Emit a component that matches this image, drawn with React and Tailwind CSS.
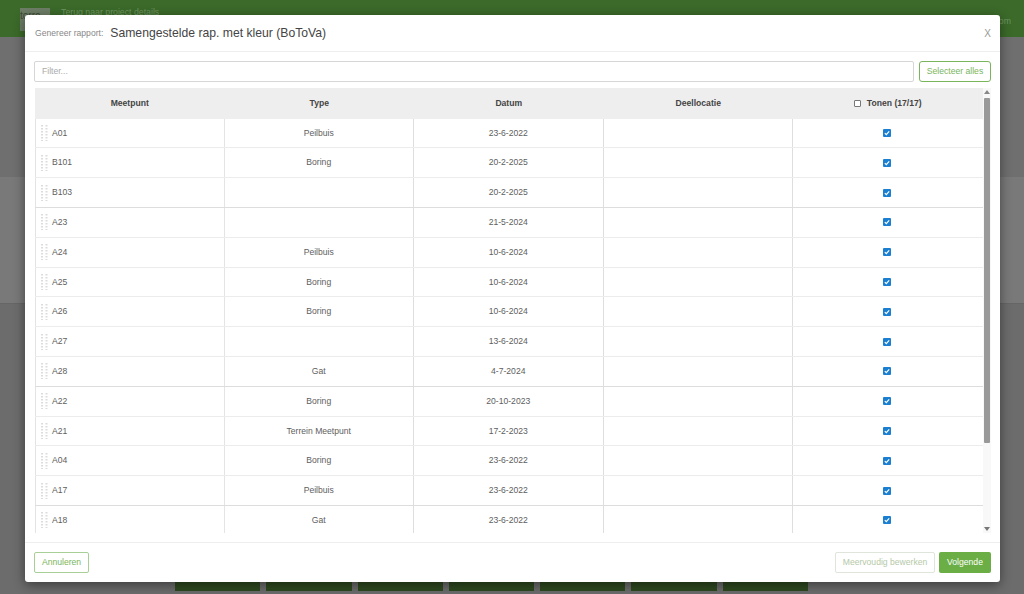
import React from "react";

const rows = [
  { name: "A01", type: "Peilbuis", date: "23-6-2022" },
  { name: "B101", type: "Boring", date: "20-2-2025" },
  { name: "B103", type: "", date: "20-2-2025", dark: true },
  { name: "A23", type: "", date: "21-5-2024" },
  { name: "A24", type: "Peilbuis", date: "10-6-2024" },
  { name: "A25", type: "Boring", date: "10-6-2024" },
  { name: "A26", type: "Boring", date: "10-6-2024" },
  { name: "A27", type: "", date: "13-6-2024" },
  { name: "A28", type: "Gat", date: "4-7-2024", dark: true },
  { name: "A22", type: "Boring", date: "20-10-2023" },
  { name: "A21", type: "Terrein Meetpunt", date: "17-2-2023" },
  { name: "A04", type: "Boring", date: "23-6-2022" },
  { name: "A17", type: "Peilbuis", date: "23-6-2022", dark: true },
  { name: "A18", type: "Gat", date: "23-6-2022" },
];

const Grip = () => (
  <svg width="7" height="16" viewBox="0 0 7 16" className="shrink-0" fill="#dcdcdc">
    {[0, 3, 6, 9, 12, 15].map((y) => (
      <g key={y}>
        <rect x="0" y={y} width="2" height="1.5" />
        <rect x="4.5" y={y} width="2" height="1.5" />
      </g>
    ))}
  </svg>
);

const Checked = () => (
  <svg width="8" height="8" viewBox="0 0 8 8">
    <rect width="8" height="8" rx="1" fill="#1a7fd0" />
    <path d="M1.8 4.2 3.3 5.7 6.2 2.4" fill="none" stroke="#fff" strokeWidth="1.2" />
  </svg>
);

const App = () => {
  return (
    <div className="relative h-[594px] w-[1024px] overflow-hidden bg-[#6c6c6c] font-['Liberation_Sans',Arial,sans-serif]">
      {/* page behind the dialog */}
      <div className="flex h-[37px] items-start justify-between bg-[#3b6a2a] pl-[20px] pr-[13px] pt-[8px] text-[8.75px] text-[#6f9560]">
        <div className="flex gap-[11px]">
          <div className="h-[23px] w-[30px] bg-[#6d7d66] pt-[1px] text-[10px] leading-[13px] text-[#3b4a34]">torro</div>
          <span className="leading-[9px]">Terug naar project details</span>
        </div>
        <span className="pt-[9px] leading-[9px]">com</span>
      </div>
      <div className="h-[140px] bg-[#6f6f6f]" />
      <div className="h-[127px] border-b border-[#666] bg-[#797979]" />
      <div className="flex h-[289px] items-end gap-[6px] pb-[2px] pl-[175px]">
        {[1, 2, 3, 4, 5, 6, 7].map((n) => (
          <div key={n} className="h-[30px] w-[85.3px] bg-[#2f4a20]" />
        ))}
      </div>

      {/* dialog */}
      <div className="absolute left-[25px] top-[15px] flex h-[567px] w-[975px] flex-col rounded-[3px] bg-white text-[8.6px] text-[#606060] shadow-[0_3px_12px_rgba(0,0,0,0.45)]">
        <div className="flex h-[37px] shrink-0 items-center border-b border-[#eeeeee] pl-[10px] pr-[9px]">
          <span className="text-[#888]">Genereer rapport:</span>
          <span className="ml-[7px] text-[12.2px] text-[#444]">Samengestelde rap. met kleur (BoToVa)</span>
          <span className="ml-auto text-[10px] text-[#999]">X</span>
        </div>

        <div className="flex gap-[5px] pl-[9px] pr-[9px] pt-[9px]">
          <div className="flex h-[21px] w-[880px] items-center rounded-[2px] border border-[#d6d6d6] pl-[7px] text-[#aaa]">
            Filter...
          </div>
          <button className="h-[21px] w-[72px] rounded-[3px] border border-[#7ab55c] text-[#7ab55c]">Selecteer alles</button>
        </div>

        <div className="flex min-h-0 flex-1 pl-[10px] pr-[9px] pt-[6px]">
          <div className="flex w-[947.5px] flex-col overflow-hidden">
            <div className="grid h-[30.6px] shrink-0 grid-cols-5 items-center bg-[#eeeeee] text-center font-bold text-[#444]">
              <span>Meetpunt</span>
              <span>Type</span>
              <span>Datum</span>
              <span>Deellocatie</span>
              <span className="flex items-center justify-center gap-[6px]">
                <span className="h-[7px] w-[7px] rounded-[1px] border border-[#777] bg-white" />
                Tonen (17/17)
              </span>
            </div>
            {rows.map((row) => (
              <div
                key={row.name}
                className={row.dark
                  ? "grid h-[29.8px] shrink-0 grid-cols-5 items-stretch border-b border-[#dddddd] text-center"
                  : "grid h-[29.8px] shrink-0 grid-cols-5 items-stretch border-b border-[#ececec] text-center"}
              >
                <div className="flex items-center gap-[4px] border-x border-[#e4e4e4] pl-[5px] text-left">
                  <Grip />
                  {row.name}
                </div>
                <div className="flex items-center justify-center border-r border-[#dedede]">{row.type}</div>
                <div className="flex items-center justify-center border-r border-[#dedede]">{row.date}</div>
                <div className="border-r border-[#dedede]" />
                <div className="flex items-center justify-center pr-[2px]">
                  <Checked />
                </div>
              </div>
            ))}
          </div>
          <div className="ml-[0.5px] flex w-[8px] flex-col items-center bg-[#f8f8f8]">
            <span className="mt-[2px] h-0 w-0 border-x-[3px] border-b-[4px] border-x-transparent border-b-[#888]" />
            <div className="mt-[4px] h-[345px] w-[6px] rounded-[1px] bg-[#999]" />
            <span className="mt-auto mb-[2px] h-0 w-0 border-x-[3px] border-t-[4px] border-x-transparent border-t-[#777]" />
          </div>
        </div>

        <div className="mt-[9px] flex h-[40px] shrink-0 items-start gap-[4px] border-t border-[#eeeeee] px-[9px] pt-[9px]">
          <button className="h-[21px] w-[55px] rounded-[2px] border border-[#a7cf96] text-[#7ab55c]">Annuleren</button>
          <button className="ml-auto h-[21px] w-[100px] rounded-[2px] border border-[#dfe5da] text-[#b5c9a8]">Meervoudig bewerken</button>
          <button className="h-[21px] w-[52px] rounded-[2px] bg-[#6aae45] text-white">Volgende</button>
        </div>
      </div>
    </div>
  );
};

export default App;
